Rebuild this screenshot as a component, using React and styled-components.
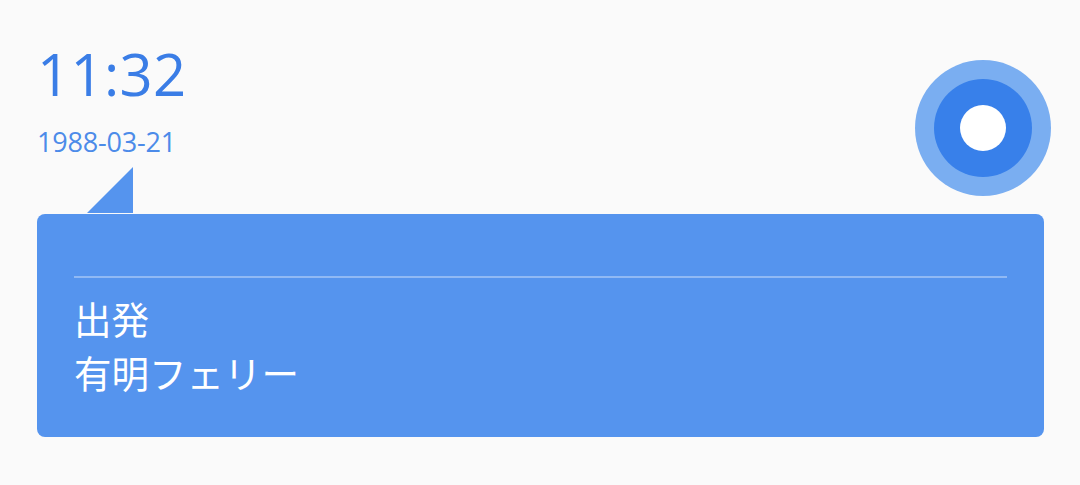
import React from "react";
import styled, { createGlobalStyle } from "styled-components";

const Global = createGlobalStyle`
  html, body { margin: 0; padding: 0; background: #fafafa; }
  body { font-family: "Open Sans", "Noto Sans CJK JP", sans-serif; }
`;

const Page = styled.div`
  padding: 45px 36px 0 37px;
`;

const Header = styled.div`
  display: flex;
  justify-content: space-between;
  align-items: flex-start;
`;

const Stamp = styled.div`
  display: flex;
  flex-direction: column;
  align-items: flex-start;
`;

const Time = styled.div`
  font-size: 58px;
  line-height: 58px;
  color: #3a7de6;
  letter-spacing: 0.3px;
`;

const DateText = styled.div`
  margin-top: 25px;
  font-size: 27px;
  line-height: 27px;
  color: #4c8be9;
  letter-spacing: -0.2px;
`;

const Pointer = styled.div`
  margin: 12px 0 0 50px;
  width: 0;
  height: 0;
  border-left: 46px solid transparent;
  border-bottom: 46px solid #5594ee;
`;

const Ring = styled.div`
  margin: 15px -7px 0 0;
  width: 136px;
  height: 136px;
  border-radius: 50%;
  background: #7aaef1;
  display: flex;
  align-items: center;
  justify-content: center;
`;

const Core = styled.div`
  width: 98px;
  height: 98px;
  border-radius: 50%;
  background: #3880ea;
  display: flex;
  align-items: center;
  justify-content: center;
`;

const Dot = styled.div`
  width: 46px;
  height: 46px;
  border-radius: 50%;
  background: #ffffff;
`;

const Card = styled.div`
  margin-top: 1px;
  height: 223px;
  box-sizing: border-box;
  background: #5594ee;
  border-radius: 8px;
  padding: 62px 37px 0;
`;

const Divider = styled.div`
  height: 2px;
  background: rgba(255, 255, 255, 0.35);
`;

const Lines = styled.div`
  margin-top: 13px;
  color: #ffffff;
  font-family: "Noto Sans CJK JP", sans-serif;
  font-size: 37.5px;
  line-height: 54px;
`;

export default function App() {
  return (
    <>
      <Global />
      <Page>
        <Header>
          <Stamp>
            <Time>11:32</Time>
            <DateText>1988-03-21</DateText>
            <Pointer />
          </Stamp>
          <Ring>
            <Core>
              <Dot />
            </Core>
          </Ring>
        </Header>
        <Card>
          <Divider />
          <Lines>
            <div>出発</div>
            <div>有明フェリー</div>
          </Lines>
        </Card>
      </Page>
    </>
  );
}
